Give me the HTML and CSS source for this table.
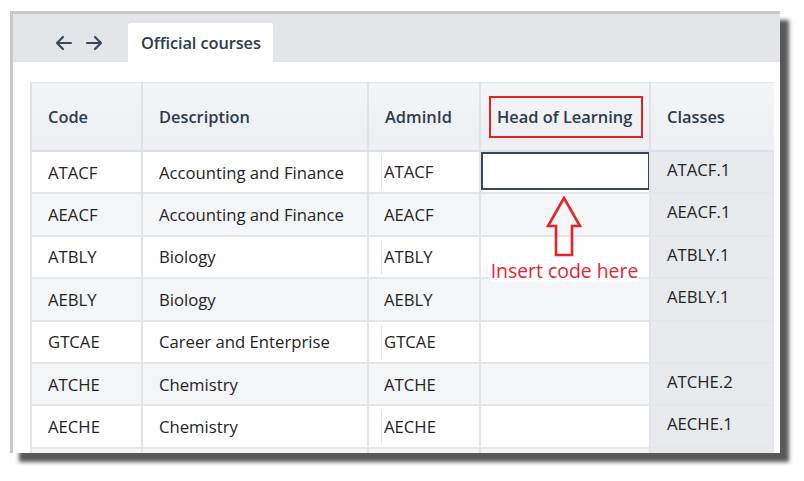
FILE: index.html
```html
<!DOCTYPE html>
<html>
<head>
<meta charset="utf-8">
<link rel="stylesheet" href="styles.css">
</head>
<body>
<div class="frame">
  <div class="tabbar">
    <div class="nav">
      <svg class="navicon" width="18" height="16" viewBox="0 0 18 16"><path d="M16 8H2M8 2L2 8l6 6" fill="none" stroke="#3b485a" stroke-width="2.2" stroke-linecap="round" stroke-linejoin="round"/></svg>
      <svg class="navicon" width="18" height="16" viewBox="0 0 18 16"><path d="M2 8h14M10 2l6 6-6 6" fill="none" stroke="#3b485a" stroke-width="2.2" stroke-linecap="round" stroke-linejoin="round"/></svg>
    </div>
    <div class="tab">Official courses</div>
  </div>
  <div class="content">
    <div class="grid">
      <div class="hd">Code</div>
      <div class="hd">Description</div>
      <div class="hd">AdminId</div>
      <div class="hd hol"><span class="redbox">Head of Learning</span></div>
      <div class="hd">Classes</div>

      <div class="c">ATACF</div><div class="c">Accounting and Finance</div><div class="c adm"><span class="in">ATACF</span></div><div class="c"><div class="input"></div></div><div class="c cls">ATACF.1</div>
      <div class="c alt">AEACF</div><div class="c alt">Accounting and Finance</div><div class="c alt adm">AEACF</div><div class="c alt"></div><div class="c cls">AEACF.1</div>
      <div class="c">ATBLY</div><div class="c">Biology</div><div class="c adm"><span class="in">ATBLY</span></div><div class="c"></div><div class="c cls">ATBLY.1</div>
      <div class="c alt">AEBLY</div><div class="c alt">Biology</div><div class="c alt adm">AEBLY</div><div class="c alt"></div><div class="c cls">AEBLY.1</div>
      <div class="c">GTCAE</div><div class="c">Career and Enterprise</div><div class="c adm"><span class="in">GTCAE</span></div><div class="c"></div><div class="c cls"></div>
      <div class="c alt">ATCHE</div><div class="c alt">Chemistry</div><div class="c alt adm">ATCHE</div><div class="c alt"></div><div class="c cls">ATCHE.2</div>
      <div class="c">AECHE</div><div class="c">Chemistry</div><div class="c adm"><span class="in">AECHE</span></div><div class="c"></div><div class="c cls">AECHE.1</div>
      <div class="c alt"></div><div class="c alt"></div><div class="c alt adm"></div><div class="c alt"></div><div class="c cls"></div>
    </div>
    <div class="note">
      <svg width="38" height="62" viewBox="0 0 38 62"><path d="M19 2L3 30h8v29h16V30h8z" fill="none" stroke="#e5232b" stroke-width="2.6" stroke-linejoin="miter"/></svg>
      <span class="notetext">Insert code here</span>
    </div>
  </div>
</div>
</body>
</html>
```
FILE: styles.css
```css
* { box-sizing: border-box; }
html, body { margin: 0; padding: 0; background: #fff; }
body {
  font-family: "Open Sans", "Noto Sans", sans-serif;
  color: #242424;
  min-height: 481px;
}
.frame {
  margin: 11px 0 0 10px;
  width: 770px;
  height: 442px;
  border-top: 3px solid #c9c9c9;
  border-left: 3px solid #c9c9c9;
  background: #fff;
  overflow: hidden;
  box-shadow: 9px 9px 4px rgba(60,60,60,0.85);
}
.tabbar {
  height: 48px;
  background: #e4e5e9;
  display: flex;
  align-items: flex-end;
}
.nav {
  display: flex;
  gap: 12px;
  padding-left: 42px;
  width: 115px;
  height: 48px;
  align-items: center;
  padding-top: 10px;
}
.navicon { display: block; }
.tab {
  height: 39px;
  width: 145px;
  background: #fff;
  border-radius: 3px 3px 0 0;
  font-size: 16.4px;
  font-weight: 600;
  color: #2d3b4d;
  padding-left: 13px;
  line-height: 40px;
  letter-spacing: -0.1px;
}
.content {
  position: relative;
  padding: 20px 0 0 17px;
}
.grid {
  display: grid;
  grid-template-columns: 111px 226px 112px 170px 125px;
  grid-template-rows: 70px repeat(8, 42.4px);
  width: 744px;
}
.hd {
  background: linear-gradient(#f4f5f7, #eceef1);
  border-left: 2px solid #dfe2e6;
  border-bottom: 2px solid #dde0e4;
  border-top: 1px solid #e6e8eb;
  font-size: 16.4px;
  font-weight: 600;
  color: #2d3b4d;
  display: flex;
  align-items: center;
  padding-left: 16px;
}
.hd.hol { padding-left: 8px; }
.redbox {
  border: 2px solid #e3222a;
  padding: 0 6px;
  height: 42px;
  width: 154px;
  display: flex;
  align-items: center;
  white-space: nowrap;
}
.c {
  background: #fff;
  border-left: 2px solid #e2e4e8;
  border-bottom: 2px solid #e4e6e9;
  font-size: 16.7px;
  display: flex;
  align-items: center;
  padding-left: 16px;
  white-space: nowrap;
}
.c.alt { background: #f4f5f7; }
.c.cls {
  background: #e8e9ec;
  align-items: flex-start;
  padding-top: 6px;
}
.c.adm { padding-left: 15px; }
.in {
  border-left: 1px solid #e0e0e0;
  padding-left: 2px;
  margin-left: -3px;
  line-height: 34px;
}
.c:has(.input) { padding: 0 0 2px 0; align-items: stretch; }
.input {
  flex: 1;
  border: 2px solid #3a4657;
  background: #fff;
  margin: 0 -1px 0 0;
}
.note {
  position: absolute;
  left: 463px;
  top: 134px;
  width: 170px;
  display: flex;
  flex-direction: column;
  align-items: center;
}
.note svg { display: block; margin-left: 5px; }
.notetext {
  font-size: 19.4px;
  color: #e5262e;
  background: #fff;
  line-height: 22px;
  margin-top: 2px;
  margin-left: 7px;
  padding: 0 1px;
  white-space: nowrap;
}
```
